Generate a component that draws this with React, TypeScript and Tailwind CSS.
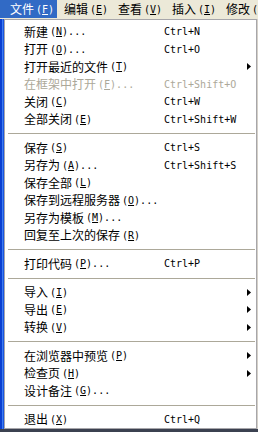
import React from "react";

type Item =
  | { sep: true }
  | {
      sep?: false;
      label: string;
      key: string;
      dots?: boolean;
      shortcut?: string;
      sub?: boolean;
      disabled?: boolean;
    };

const items: Item[] = [
  { label: "新建", key: "N", dots: true, shortcut: "Ctrl+N" },
  { label: "打开", key: "O", dots: true, shortcut: "Ctrl+O" },
  { label: "打开最近的文件", key: "T", sub: true },
  { label: "在框架中打开", key: "F", dots: true, shortcut: "Ctrl+Shift+O", disabled: true },
  { label: "关闭", key: "C", shortcut: "Ctrl+W" },
  { label: "全部关闭", key: "E", shortcut: "Ctrl+Shift+W" },
  { sep: true },
  { label: "保存", key: "S", shortcut: "Ctrl+S" },
  { label: "另存为", key: "A", dots: true, shortcut: "Ctrl+Shift+S" },
  { label: "保存全部", key: "L" },
  { label: "保存到远程服务器", key: "O", dots: true },
  { label: "另存为模板", key: "M", dots: true },
  { label: "回复至上次的保存", key: "R" },
  { sep: true },
  { label: "打印代码", key: "P", dots: true, shortcut: "Ctrl+P" },
  { sep: true },
  { label: "导入", key: "I", sub: true },
  { label: "导出", key: "E", sub: true },
  { label: "转换", key: "V", sub: true },
  { sep: true },
  { label: "在浏览器中预览", key: "P", sub: true },
  { label: "检查页", key: "H", sub: true },
  { label: "设计备注", key: "G", dots: true },
  { sep: true },
  { label: "退出", key: "X", shortcut: "Ctrl+Q" },
];

const menus = [
  { label: "编辑", key: "E" },
  { label: "查看", key: "V" },
  { label: "插入", key: "I" },
  { label: "修改", key: "M" },
];

const cjk = "font-['SimSun','Noto_Sans_CJK_SC',sans-serif] text-[12px]";
const mono = "font-['DejaVu_Sans_Mono',monospace] text-[10px]";

const Mnemonic = (props: { k: string; dots?: boolean }) => {
  return (
    <span className={`${mono} ml-[2px]`}>
      (<span className="underline underline-offset-[1px]">{props.k}</span>)
      {props.dots && "..."}
    </span>
  );
};

const Arrow = () => (
  <svg width="4" height="7" viewBox="0 0 4 7" className="block">
    <path d="M0 0 L4 3.5 L0 7 Z" fill="#000" />
  </svg>
);

export default function App() {
  return (
    <div className="flex h-[432px] w-[258px] flex-col overflow-hidden bg-[#3b4150]">
      {/* menu bar */}
      <div className="flex h-[19px] shrink-0 items-start whitespace-nowrap bg-[#ece9d8] text-black">
        <div className="flex h-[18px] w-[57px] shrink-0 items-center bg-[#316ac5] pl-[10px] text-white">
          <span className={cjk}>文件</span>
          <Mnemonic k="F" />
        </div>
        <div className="w-[7px] shrink-0" />
        {menus.map((m) => (
          <div key={m.label} className="flex h-[18px] w-[54px] shrink-0 items-center">
            <span className={cjk}>{m.label}</span>
            <Mnemonic k={m.key} />
          </div>
        ))}
      </div>

      <div className="flex h-[410px] shrink-0">
        {/* window frame strip */}
        <div className="flex w-[4px] shrink-0">
          <div className="w-[2px] bg-[#0b3fd0]" />
          <div className="w-[1px] bg-[#3d7cf0]" />
          <div className="w-[1px] bg-[#1a55e0]" />
        </div>

        {/* drop-down panel */}
        <div className="flex w-[253px] shrink-0 flex-col border border-[#a7a6aa] bg-white pt-[3px]">
          {items.map((it, i) => {
            if (it.sep) {
              return (
                <div key={i} className="flex h-[11px] items-center pl-[3px] pr-[1px]">
                  <div className="h-[1px] w-full bg-[#aca899]" />
                </div>
              );
            }
            return (
              <div
                key={i}
                className={`flex h-[17.5px] items-center whitespace-nowrap pl-[19px] pr-[5px] ${
                  it.disabled ? "text-[#aca899]" : "text-black"
                }`}
              >
                <div className="flex w-[140px] shrink-0 items-center">
                  <span className={cjk}>{it.label}</span>
                  <Mnemonic k={it.key} dots={it.dots} />
                </div>
                <span className={`${mono} flex-1`}>{it.shortcut ?? ""}</span>
                {it.sub && <Arrow />}
              </div>
            );
          })}
        </div>

        <div className="w-[1px] shrink-0 bg-[#d4d0c8]" />
      </div>
    </div>
  );
}
